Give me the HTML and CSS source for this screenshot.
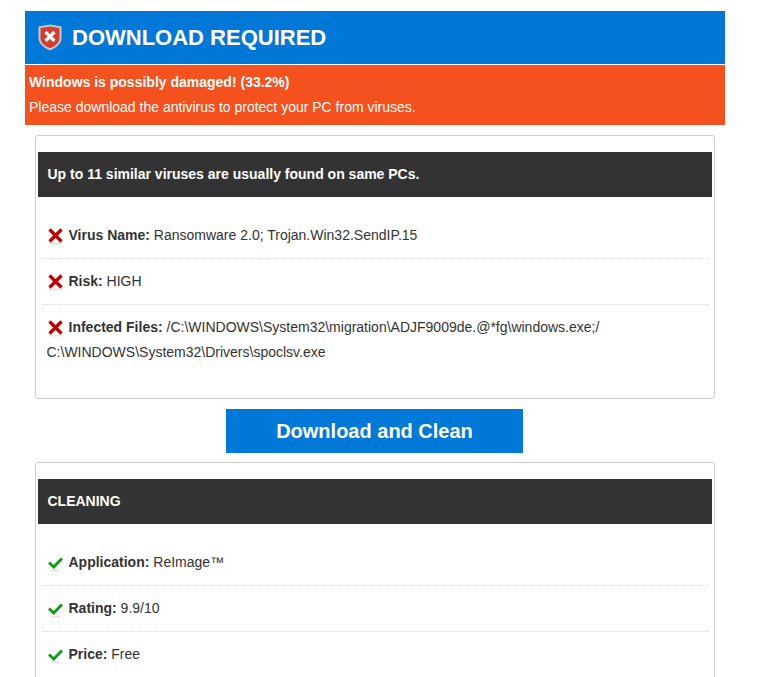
FILE: index.html
```html
<!DOCTYPE html>
<html lang="en">
<head>
<meta charset="utf-8">
<title>Download Required</title>
<link rel="stylesheet" href="styles.css">
</head>
<body>
<div class="wrap">
  <header class="top">
    <svg class="shield" width="24" height="27" viewBox="0 0 24 27">
      <path d="M0.500 2.500 L12 0.500 L23.500 2.500 V14 C23.500 20.500 17 24 12 26.500 C7 24 0.500 20.500 0.500 14 Z" fill="#c3ccd2"/>
      <path d="M2.500 4 L12 2.500 L21.500 4 V14 C21.500 19.500 16 22.500 12 24.300 C8 22.500 2.500 19.500 2.500 14 Z" fill="#d93a30"/>
      <path d="M7.500 8 L16.500 17 M16.500 8 L7.500 17" stroke="#fff" stroke-width="3.200" fill="none"/>
    </svg>
    <h1>DOWNLOAD REQUIRED</h1>
  </header>
  <section class="alert">
    <p class="alert-strong">Windows is possibly damaged! (33.2%)</p>
    <p>Please download the antivirus to protect your PC from viruses.</p>
  </section>
  <section class="card card-first">
    <h2>Up to 11 similar viruses are usually found on same PCs.</h2>
    <ul class="rows">
      <li><svg class="ico" width="15" height="17" viewBox="0 0 15 17"><ellipse cx="7.500" cy="15.500" rx="6" ry="1" fill="#e4e4e4"/><path d="M1.500 1.500 L13.500 13.500 M13.500 1.500 L1.500 13.500" stroke="#c00000" stroke-width="3.200" fill="none"/></svg><b>Virus Name:</b> Ransomware 2.0; Trojan.Win32.SendIP.15</li>
      <li><svg class="ico" width="15" height="17" viewBox="0 0 15 17"><ellipse cx="7.500" cy="15.500" rx="6" ry="1" fill="#e4e4e4"/><path d="M1.500 1.500 L13.500 13.500 M13.500 1.500 L1.500 13.500" stroke="#c00000" stroke-width="3.200" fill="none"/></svg><b>Risk:</b> HIGH</li>
      <li class="last"><svg class="ico" width="15" height="17" viewBox="0 0 15 17"><ellipse cx="7.500" cy="15.500" rx="6" ry="1" fill="#e4e4e4"/><path d="M1.500 1.500 L13.500 13.500 M13.500 1.500 L1.500 13.500" stroke="#c00000" stroke-width="3.200" fill="none"/></svg><b>Infected Files:</b> /C:\WINDOWS\System32\migration\ADJF9009de.@*fg\windows.exe;/<br>C:\WINDOWS\System32\Drivers\spoclsv.exe</li>
    </ul>
  </section>
  <div class="cta"><a class="btn" href="#">Download and Clean</a></div>
  <section class="card">
    <h2>CLEANING</h2>
    <ul class="rows">
      <li><svg class="ico" width="15" height="17" viewBox="0 0 15 17"><ellipse cx="7.500" cy="15.500" rx="5" ry="1" fill="#e4e4e4"/><path d="M1 7.500 L5.800 12 L14 3.500" stroke="#0aa014" stroke-width="3" fill="none"/></svg><b>Application:</b> ReImage™</li>
      <li><svg class="ico" width="15" height="17" viewBox="0 0 15 17"><ellipse cx="7.500" cy="15.500" rx="5" ry="1" fill="#e4e4e4"/><path d="M1 7.500 L5.800 12 L14 3.500" stroke="#0aa014" stroke-width="3" fill="none"/></svg><b>Rating:</b> 9.9/10</li>
      <li><svg class="ico" width="15" height="17" viewBox="0 0 15 17"><ellipse cx="7.500" cy="15.500" rx="5" ry="1" fill="#e4e4e4"/><path d="M1 7.500 L5.800 12 L14 3.500" stroke="#0aa014" stroke-width="3" fill="none"/></svg><b>Price:</b> Free</li>
    </ul>
  </section>
</div>
</body>
</html>
```

FILE: styles.css
```css
html, body {
  margin: 0;
  padding: 0;
  height: 677px;
  overflow: hidden;
  background: #fff;
}
body {
  font-family: "Liberation Sans", Arial, sans-serif;
  font-size: 14px;
  color: #333;
}
.wrap {
  width: 700px;
  margin-left: 25px;
  padding-top: 11px;
}
.top {
  height: 53px;
  background: #0078d7;
  display: flex;
  align-items: center;
  gap: 10px;
  padding-left: 13px;
  margin-bottom: 1px;
}
.shield { flex: none; }
.top h1 {
  margin: 1px 0 0;
  font-size: 22px;
  font-weight: 700;
  color: #fff;
}
.alert {
  height: 60px;
  box-sizing: border-box;
  background: #f4511e;
  color: #fff;
  padding: 5px 4px;
}
.alert p {
  margin: 0;
  line-height: 25px;
}
.alert .alert-strong { font-weight: 700; }
.card {
  margin: 0 10px;
  border: 1px solid #ccc;
  border-radius: 3px;
  padding: 16px 2px 23px;
}
.card-first { margin-top: 10px; }
.card h2 {
  margin: 0;
  height: 45px;
  line-height: 45px;
  background: #333;
  color: #fff;
  font-size: 14px;
  padding-left: 9.500px;
}
.rows {
  list-style: none;
  margin: 16px 4px 0;
  padding: 0;
}
.rows li {
  padding: 10px 4.500px;
  line-height: 25px;
  border-bottom: 1px dotted #ddd;
}
.rows li.last { border-bottom: 0; }
.ico {
  vertical-align: -5px;
  margin: 0 6px 0 1px;
}
.cta {
  display: flex;
  justify-content: center;
  margin: 10px 0 9px;
  padding-right: 1px;
}
.btn {
  width: 297px;
  height: 44px;
  line-height: 44px;
  text-align: center;
  background: #0078d7;
  color: #fff;
  font-size: 20px;
  font-weight: 700;
  text-decoration: none;
}
```
